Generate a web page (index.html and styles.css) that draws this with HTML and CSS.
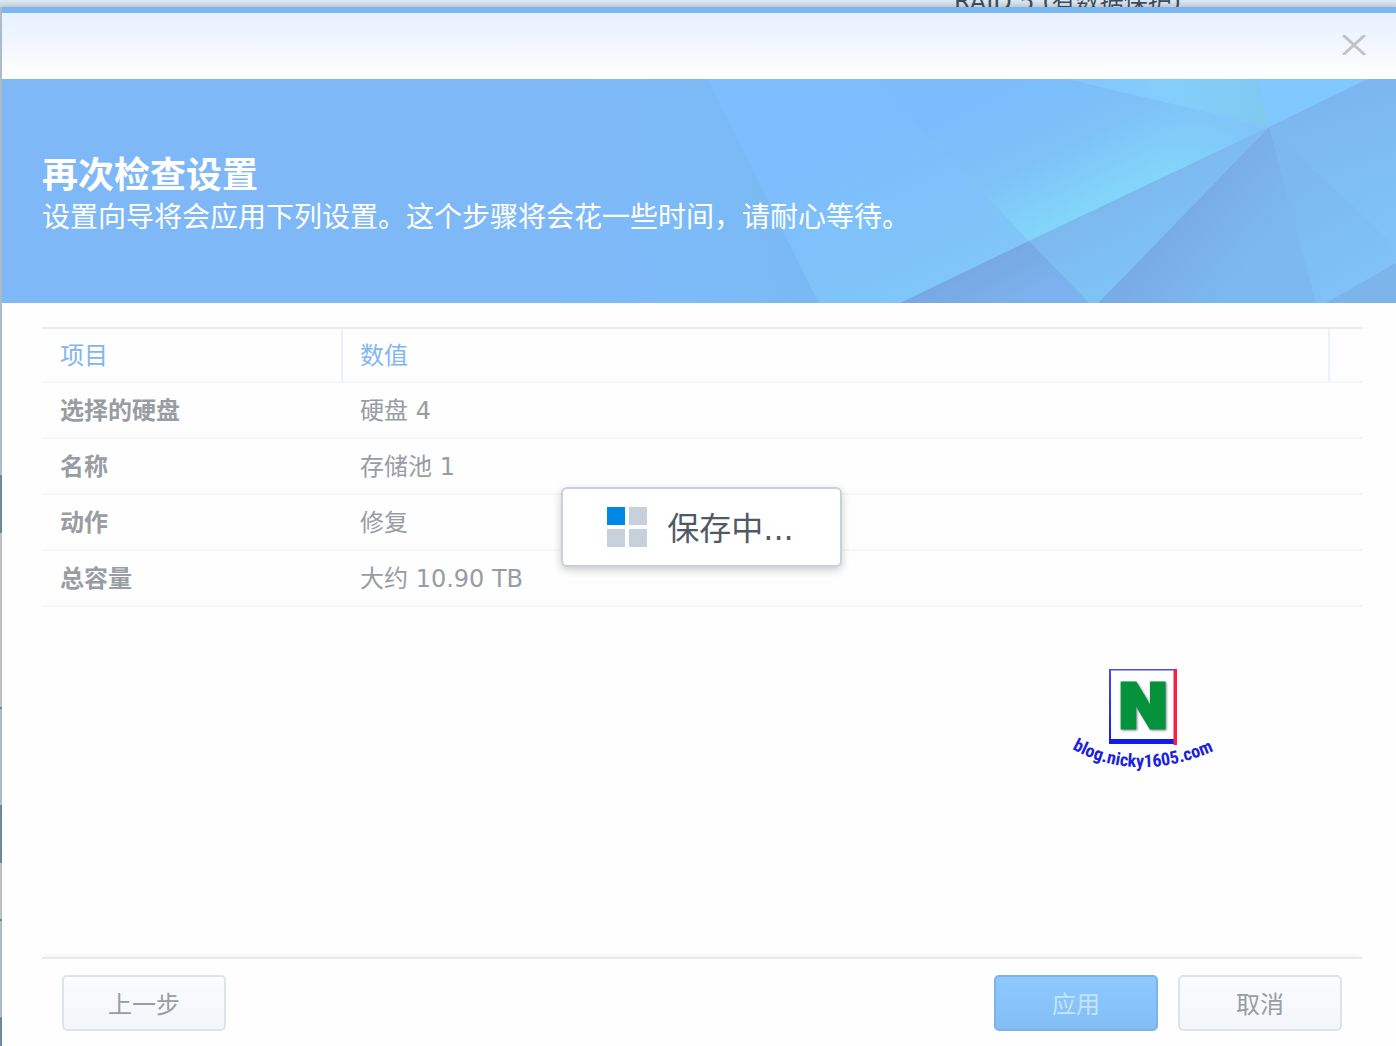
FILE: index.html
```html
<!DOCTYPE html>
<html lang="zh-CN">
<head>
<meta charset="utf-8">
<title>再次检查设置</title>
<link rel="stylesheet" href="styles.css">
</head>
<body class="page">
  <div class="backdrop"><span class="backdrop-text">RAID 5 (有数据保护)</span></div>
  <main class="dialog">
    <header class="titlebar">
      <button class="close" type="button" aria-label="关闭">
        <svg width="24" height="20" viewBox="0 0 24 20" aria-hidden="true">
          <path d="M1 0L23 20M23 0L1 20" fill="none" stroke="#c0c3ca" stroke-width="3"/>
        </svg>
      </button>
    </header>

    <section class="banner">
      <svg class="facets" viewBox="0 0 836 224" preserveAspectRatio="xMaxYMid slice" aria-hidden="true">
        <defs>
          <linearGradient id="base" x1="0" x2="1" y1="0" y2="0">
            <stop offset="0" stop-color="#7eb8f7"/><stop offset=".25" stop-color="#7dbdfb"/><stop offset="1" stop-color="#7fc0f9"/>
          </linearGradient>
          <linearGradient id="fold" gradientUnits="userSpaceOnUse" x1="70" y1="140" x2="203" y2="112">
            <stop offset="0" stop-color="#7cbaf6" stop-opacity="0"/><stop offset="1" stop-color="#7bb9f4"/>
          </linearGradient>
          <linearGradient id="mid" gradientUnits="userSpaceOnUse" x1="320" y1="40" x2="390" y2="200">
            <stop offset="0" stop-color="#7dbcfd"/><stop offset="1" stop-color="#80c6f8"/>
          </linearGradient>
          <linearGradient id="glow" gradientUnits="userSpaceOnUse" x1="490" y1="-10" x2="553" y2="122">
            <stop offset="0" stop-color="#7cbcfd"/><stop offset=".5" stop-color="#7ec2f7"/><stop offset="1" stop-color="#83d6fb"/>
          </linearGradient>
          <linearGradient id="fade" gradientUnits="userSpaceOnUse" x1="610" y1="95" x2="700" y2="52">
            <stop offset="0" stop-color="#80c4f8" stop-opacity="0"/><stop offset="1" stop-color="#80c4f8"/>
          </linearGradient>
          <linearGradient id="top" gradientUnits="userSpaceOnUse" x1="520" y1="0" x2="705" y2="30">
            <stop offset="0" stop-color="#82c6fe"/><stop offset=".5" stop-color="#84cefc"/><stop offset="1" stop-color="#80c9f1"/>
          </linearGradient>
          <linearGradient id="dark1" gradientUnits="userSpaceOnUse" x1="400" y1="180" x2="430" y2="240">
            <stop offset="0" stop-color="#77a6e1"/><stop offset="1" stop-color="#7bb2ed"/>
          </linearGradient>
          <linearGradient id="ray" gradientUnits="userSpaceOnUse" x1="550" y1="125" x2="600" y2="215">
            <stop offset="0" stop-color="#7cb9ef"/><stop offset="1" stop-color="#80c6f7"/>
          </linearGradient>
          <linearGradient id="dark2" gradientUnits="userSpaceOnUse" x1="620" y1="130" x2="690" y2="185">
            <stop offset="0" stop-color="#79abe4"/><stop offset="1" stop-color="#7bb9ef"/>
          </linearGradient>
          <linearGradient id="ray2" gradientUnits="userSpaceOnUse" x1="720" y1="120" x2="780" y2="224">
            <stop offset="0" stop-color="#7bb9f0"/><stop offset="1" stop-color="#80c3f8"/>
          </linearGradient>
          <linearGradient id="right" gradientUnits="userSpaceOnUse" x1="790" y1="10" x2="836" y2="150">
            <stop offset="0" stop-color="#7bb7ee"/><stop offset="1" stop-color="#80c3f7"/>
          </linearGradient>
        </defs>
        <rect width="836" height="224" fill="url(#base)"/>
        <path d="M40 0H147L259 224H40Z" fill="url(#fold)"/>
        <path d="M147 0H317L469 162L340 224H259Z" fill="url(#mid)"/>
        <path d="M317 0H507L709 48L469 162L341 28Z" fill="url(#glow)"/>
        <path d="M317 0H507L709 48L469 162L341 28Z" fill="url(#fade)"/>
        <path d="M507 0H697L709 48Z" fill="url(#top)"/>
        <path d="M697 0H808L709 48Z" fill="#80c8fd"/>
        <path d="M808 0H836V168L709 48Z" fill="url(#right)"/>
        <path d="M709 48L836 168V184L766 224H756Z" fill="url(#ray2)"/>
        <path d="M836 184V224H766Z" fill="#7bb5ea"/>
        <path d="M709 48L756 224H538Z" fill="url(#dark2)"/>
        <path d="M709 48L538 224H529L469 162Z" fill="url(#ray)"/>
        <path d="M469 162L529 224H340Z" fill="url(#dark1)"/>
      </svg>
      <h1 class="heading">再次检查设置</h1>
      <p class="subheading">设置向导将会应用下列设置。这个步骤将会花一些时间，请耐心等待。</p>
    </section>

    <section class="content">
      <table class="summary">
        <colgroup><col class="col-item"><col><col class="col-end"></colgroup>
        <thead>
          <tr><th scope="col">项目</th><th scope="col">数值</th><td></td></tr>
        </thead>
        <tbody>
          <tr><th scope="row">选择的硬盘</th><td colspan="2">硬盘 4</td></tr>
          <tr><th scope="row">名称</th><td colspan="2">存储池 1</td></tr>
          <tr><th scope="row">动作</th><td colspan="2">修复</td></tr>
          <tr><th scope="row">总容量</th><td colspan="2">大约 10.90 TB</td></tr>
        </tbody>
      </table>
    </section>

    <footer class="actions">
      <button class="btn" type="button">上一步</button>
      <div class="actions-end">
        <button class="btn btn-primary" type="button">应用</button>
        <button class="btn" type="button">取消</button>
      </div>
    </footer>

    <svg class="watermark" width="150" height="120" viewBox="0 0 150 120">
      <defs>
        <path id="arc" d="M2 87Q70 124 150 86"/>
        <linearGradient id="frame" x1="0" x2="0" y1="0" y2="1"><stop offset="0" stop-color="#4a4af5"/><stop offset="1" stop-color="#1620ea"/></linearGradient>
      </defs>
      <path d="M39 7H105V8.500H41V77H39Z" fill="url(#frame)"/>
      <path d="M39 77H105V82H39Z" fill="#141ce8"/>
      <path d="M103.500 7H107V83H103.500Z" fill="#fb1f45"/>
      <text class="mark" x="73" y="66" text-anchor="middle">N</text>
      <text class="mark-url"><textPath href="#arc">blog.nicky1605.com</textPath></text>
    </svg>

    <div class="mask">
      <div class="loading" role="status">
        <svg width="40" height="40" viewBox="0 0 40 40" aria-hidden="true">
          <path d="M0 0H18V18H0Z" fill="#0086e5"/>
          <path d="M22 0H40V18H22ZM0 22H18V40H0ZM22 22H40V40H22Z" fill="#c7d1dc"/>
        </svg>
        <span class="loading-text">保存中...</span>
      </div>
    </div>
  </main>
</body>
</html>
```
FILE: styles.css
```css
* { box-sizing: border-box; }

.page {
  margin: 0;
  min-height: 100vh;
  display: flex;
  flex-direction: column;
  padding-left: 2px;
  font-family: "DejaVu Sans", "Noto Sans CJK SC", sans-serif;
  font-size: 24px;
  line-height: 32px;
  color: #979da2;
  background: linear-gradient(#b4c2cf 475px, #6d8fa8 475px 533px, #c6c7c9 533px 707px, #6d8fa8 707px 709px, #b4c2cf 709px 805px, #6d8fa8 805px 863px, #c6c7c9 863px 919px, #6d8fa8 919px 921px, #b4c2cf 921px 1017px, #6d8fa8 1017px);
}

.backdrop {
  height: 7px;
  margin-left: -2px;
  padding-right: 215px;
  display: flex;
  justify-content: flex-end;
  align-items: flex-end;
  overflow: hidden;
  white-space: nowrap;
  color: #414b55;
  background: linear-gradient(#dce9f2, #c9d6df);
}

.backdrop-text { line-height: 10px; }

.dialog {
  position: relative;
  flex: 1;
  display: flex;
  flex-direction: column;
  border-top: 6px solid #7db6f1;
  background: #fefefe;
  box-shadow: 0 0 6px rgba(0, 0, 0, .1);
}

.titlebar {
  height: 66px;
  padding: 0 26px 2px 0;
  display: flex;
  align-items: center;
  justify-content: flex-end;
  background: linear-gradient(#e6f2fd, #f2f7fe 50%, #fff);
}

.close {
  padding: 4px;
  display: flex;
  border: 0;
  background: none;
}

.banner {
  position: relative;
  min-height: 224px;
  padding: 14px 40px 0;
  display: flex;
  flex-direction: column;
  justify-content: center;
  color: #fff;
  background: #7eb8f7;
}

.facets {
  position: absolute;
  top: 0;
  right: 0;
  width: 836px;
  max-width: 100%;
  height: 100%;
}

.heading, .subheading { position: relative; margin: 0; }
.heading { font-size: 36px; line-height: 40px; }
.subheading { font-size: 28px; line-height: 44px; }

.content {
  flex: 1;
  padding: 24px 34px 24px 40px;
}

.summary {
  width: 100%;
  table-layout: fixed;
  border-collapse: separate;
  border-spacing: 0;
  border-top: 2px solid #e8ecf2;
}

.col-item { width: 301px; }
.col-end { width: 32px; }

.summary th, .summary td {
  height: 56px;
  padding: 2px 17px 0;
  text-align: left;
  border-bottom: 2px solid #f5f6f8;
}

.summary th:first-child { padding-left: 18px; }

.summary thead th, .summary thead td { height: 54px; }

.summary thead th {
  font-weight: normal;
  color: #81b6f2;
  border-right: 2px solid #ebf0fa;
}

.actions {
  margin: 0 34px 0 40px;
  padding: 16px 20px 15px;
  display: flex;
  justify-content: space-between;
  border-top: 2px solid #e8e9ea;
  box-shadow: 0 -4px 4px -2px #f4f4f4;
}

.actions-end { display: flex; gap: 20px; }

.btn {
  width: 164px;
  height: 56px;
  padding: 4px 0 0;
  font: inherit;
  color: #979da2;
  border: 2px solid #dee3ea;
  border-radius: 5px;
  background: linear-gradient(#fbfcff, #f3f5f8);
}

.btn-primary {
  color: #c5e4fc;
  border-color: #7bb3ea;
  background: linear-gradient(#8dcaff, #83bdf3);
}

.watermark {
  position: absolute;
  top: 649px;
  right: 176px;
}

.mark {
  font-family: Inter, sans-serif;
  font-size: 62px;
  font-weight: 900;
  fill: #05923c;
  stroke: #05923c;
  stroke-width: 3px;
  filter: drop-shadow(1px 1px 1px #8a8399);
}

.mark-url {
  font-family: "Roboto Condensed", Roboto, sans-serif;
  font-size: 18px;
  font-weight: 700;
  fill: #1a22dc;
}

.mask {
  position: absolute;
  inset: -6px 0 0;
  padding-left: 5px;
  display: flex;
  align-items: center;
  justify-content: center;
}

.loading {
  height: 80px;
  padding: 0 46px 0 44px;
  display: flex;
  align-items: center;
  gap: 20px;
  font-size: 32px;
  color: #505a64;
  border: 2px solid #c7d1dc;
  border-radius: 6px;
  background: #fff;
  box-shadow: 0 3px 8px rgba(0, 0, 0, .2);
}

.loading-text { padding-top: 4px; }
```
